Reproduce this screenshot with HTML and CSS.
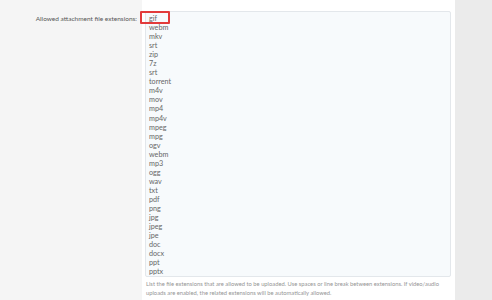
FILE: index.html
```html
<!DOCTYPE html>
<html>
<head>
<meta charset="utf-8">
<link rel="stylesheet" href="styles.css">
</head>
<body>
<div class="page">
  <div class="form-row">
    <div class="label-col">
      <label class="label" for="ext">Allowed attachment file extensions:</label>
    </div>
    <div class="input-col">
      <div class="field">
        <textarea id="ext" class="textarea" readonly>gif
webm
mkv
srt
zip
7z
srt
torrent
m4v
mov
mp4
mp4v
mpeg
mpg
ogv
webm
mp3
ogg
wav
txt
pdf
png
jpg
jpeg
jpe
doc
docx
ppt
pptx</textarea>
        <span class="highlight"></span>
      </div>
      <div class="explain">
        <span class="explain-line">List the file extensions that are allowed to be uploaded. Use spaces or line break between extensions. If video/audio</span>
        <span class="explain-line">uploads are enabled, the related extensions will be automatically allowed.</span>
      </div>
    </div>
  </div>
  <div class="sidebar"></div>
</div>
</body>
</html>
```
FILE: styles.css
```css
html, body {
  margin: 0;
  padding: 0;
  height: 100%;
  overflow: hidden;
}
body {
  font-family: Lato, "Open Sans", sans-serif;
}
.page {
  display: flex;
  height: 300px;
  width: 492px;
}
.form-row {
  display: flex;
  width: 455px;
  background: #ffffff;
}
.label-col {
  width: 142px;
  flex: none;
  background: #f5f5f5;
  box-sizing: border-box;
  padding: 14px 5px 0 0;
  text-align: right;
  font-size: 6.5px;
  line-height: 9px;
}
.label {
  color: #575757;
}
.input-col {
  flex: 1;
  padding: 11px 4px 0 3px;
  font-size: 6px;
  line-height: 9px;
}
.field {
  position: relative;
}
.textarea {
  display: block;
  box-sizing: border-box;
  width: 306px;
  height: 266px;
  margin: 0;
  padding: 2px 3px;
  border: 1px solid #e3e7eb;
  border-radius: 2px;
  background: #f7fafc;
  font-family: Lato, "Open Sans", sans-serif;
  font-size: 7.2px;
  line-height: 9.04px;
  color: #666666;
  resize: none;
  overflow: hidden;
  outline: none;
}
.highlight {
  position: absolute;
  left: -5px;
  top: 0;
  width: 30px;
  height: 13px;
  box-sizing: border-box;
  border: 2px solid #e23b3b;
  border-radius: 1px;
}
.explain {
  padding: 2px 0 0 1px;
  font-size: 5.8px;
  line-height: 9px;
  color: #959595;
}
.explain-line {
  display: block;
  white-space: nowrap;
}
.sidebar {
  flex: 1;
  background: #ebebeb;
}
```
